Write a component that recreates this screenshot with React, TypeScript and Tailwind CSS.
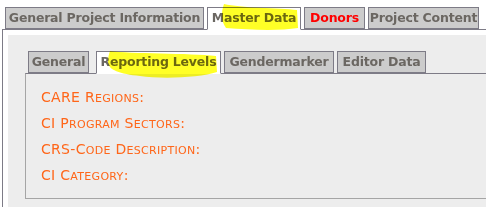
import React from "react";

const outerTabs = [
  { label: "General Project Information", active: false, red: false, w: "w-[199px]" },
  { label: "Master Data", active: true, red: false, w: "w-[94px]" },
  { label: "Donors", active: false, red: true, w: "w-[61px]" },
  { label: "Project Content", active: false, red: false, w: "w-[111px]" },
];

const innerTabs = [
  { label: "General", active: false, w: "w-[61px] mr-[4px]" },
  { label: "Reporting Levels", active: true, w: "w-[125px]" },
  { label: "Gendermarker", active: false, w: "w-[110px]" },
  { label: "Editor Data", active: false, w: "w-[89px]" },
];

const fields = ["CARE Regions:", "CI Program Sectors:", "CRS-Code Description:", "CI Category:"];

// small caps: lowercase runs drawn as smaller capitals
const SmallCaps = ({ text }: { text: string }) => (
  <>
    {text.split(/([a-z]+)/).map((part, i) =>
      /^[a-z]+$/.test(part) ? (
        <span key={i} className="text-[11px] uppercase">
          {part}
        </span>
      ) : (
        <span key={i}>{part}</span>
      )
    )}
  </>
);

const Tab = ({ label, active, red, w }: { label: string; active: boolean; red?: boolean; w: string }) => (
  <div
    className={
      "h-[22px] border border-[#7d7b86] flex items-center justify-center whitespace-nowrap text-[12.5px] tracking-[-0.2px] font-bold leading-none " +
      w +
      (active ? " bg-white border-b-white -mb-px h-[23px]" : " bg-[#cccccc]") +
      (red ? " text-[#ff0000]" : " text-[#6b6762]")
    }
  >
    {label}
  </div>
);

export default function App() {
  return (
    <div
      className="relative w-[486px] h-[207px] overflow-hidden bg-white"
      style={{ fontFamily: '"DejaVu Sans", Verdana, sans-serif' }}
    >
      {/* outer tabs */}
      <div className="flex items-end gap-[3px] pl-[5px] pt-[7px]">
        {outerTabs.map((t) => (
          <Tab key={t.label} {...t} />
        ))}
      </div>

      <div className="ml-[2px] border-l border-t border-[#7d7b86] bg-white pl-[5px] pt-[5px] h-[190px]">
        <div className="bg-[#ededed] h-full pt-[16px] pl-[17px]">
          {/* inner tabs */}
          <div className="flex items-end gap-[3px] pl-[3px]">
            {innerTabs.map((t) => (
              <Tab key={t.label} {...t} />
            ))}
          </div>
          <div className="border-l border-t border-b border-t-[#7d7b86] border-l-[#a5a5a5] border-b-[#a5a5a5] pl-[15px] pt-[15px] pb-[15px] flex flex-col gap-[10px]">
            {fields.map((f) => (
              <div key={f} className="h-[16px] flex items-baseline text-[14px] leading-[16px] text-[#ff6619] tracking-[0.3px] whitespace-pre">
                <SmallCaps text={f} />
              </div>
            ))}
          </div>
        </div>
      </div>

      {/* yellow highlighter marks */}
      <svg className="absolute left-0 top-0 pointer-events-none" width="486" height="207">
        <path
          d="M224 4 C 240 8, 280 8, 297 10 L 298 28 C 280 31, 250 30, 226 28 C 221 22, 221 12, 224 4 Z"
          fill="#ffff00"
          fillOpacity="0.85"
          style={{ mixBlendMode: "multiply" }}
        />
        <path
          d="M110 51 C 130 54, 190 53, 216 56 L 217 72 C 200 78, 160 79, 140 76 C 120 74, 108 70, 108 62 C 108 57, 109 54, 110 51 Z"
          fill="#ffff00"
          fillOpacity="0.85"
          style={{ mixBlendMode: "multiply" }}
        />
      </svg>
    </div>
  );
}
